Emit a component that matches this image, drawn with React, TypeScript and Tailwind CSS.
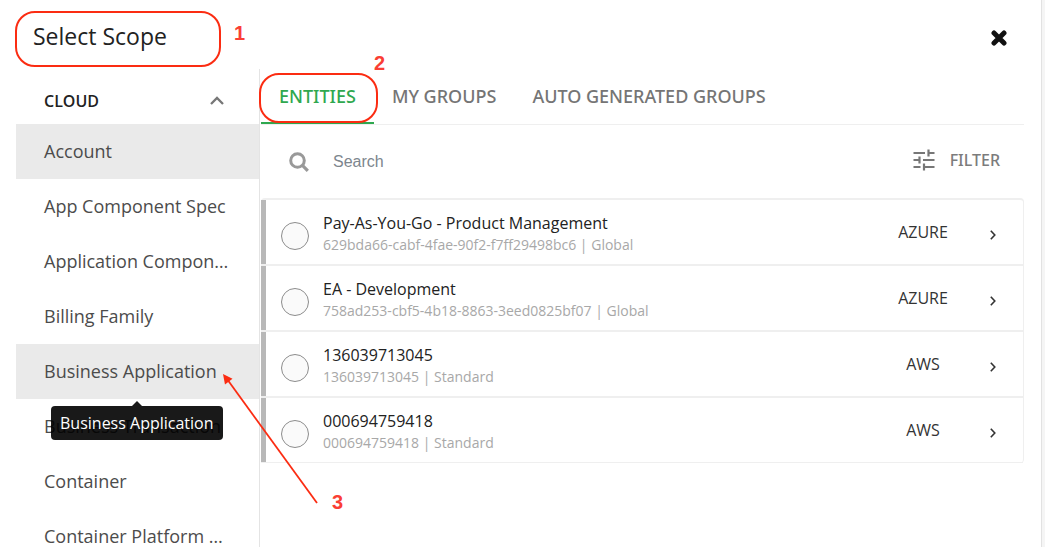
import { useState } from "react";

const CATEGORIES = [
  "Account",
  "App Component Spec",
  "Application Component",
  "Billing Family",
  "Business Application",
  "Business Transaction",
  "Container",
  "Container Platform Cluster",
];

const HOVERED = "Business Application";

const TABS = ["Entities", "My Groups", "Auto Generated Groups"];

interface Entity {
  name: string;
  id: string;
  kind: string;
  provider: string;
}

const ENTITIES: Entity[] = [
  { name: "Pay-As-You-Go - Product Management", id: "629bda66-cabf-4fae-90f2-f7ff29498bc6", kind: "Global", provider: "AZURE" },
  { name: "EA - Development", id: "758ad253-cbf5-4b18-8863-3eed0825bf07", kind: "Global", provider: "AZURE" },
  { name: "136039713045", id: "136039713045", kind: "Standard", provider: "AWS" },
  { name: "000694759418", id: "000694759418", kind: "Standard", provider: "AWS" },
];

function CloseIcon() {
  return (
    <svg viewBox="0 0 16 16" className="size-4" fill="none" stroke="#111" strokeWidth="5" strokeLinecap="round" aria-hidden="true">
      <path d="M3 3L13 13M13 3L3 13" />
    </svg>
  );
}

function ChevronUp() {
  return (
    <svg viewBox="0 0 14 9" className="h-[9px] w-3.5" fill="none" stroke="#777" strokeWidth="2.3" aria-hidden="true">
      <path d="M1 8L7 2L13 8" />
    </svg>
  );
}

function ChevronRight() {
  return (
    <svg viewBox="0 0 6 10" className="h-2.5 w-1.5" fill="none" stroke="#333" strokeWidth="1.6" aria-hidden="true">
      <path d="M0.8 0.8L4.8 5L0.8 9.2" />
    </svg>
  );
}

function SearchIcon() {
  return (
    <svg viewBox="0 0 20 20" className="size-5" fill="none" stroke="#999" strokeWidth="3" aria-hidden="true">
      <circle cx="8.5" cy="8.5" r="6.8" />
      <path d="M13.2 13.2L18.8 18.8" strokeWidth="3.2" />
    </svg>
  );
}

function TuneIcon() {
  return (
    <svg viewBox="0 0 22 22" className="size-[22px]" fill="none" stroke="#777" strokeWidth="2.2" aria-hidden="true">
      <path d="M0.500 4H12M15 4H21.500M15.500 0.500V7.500" />
      <path d="M0.500 11H7M6.500 7.500V14.500M10 11H21.500" />
      <path d="M0.500 18H7.500M11 18H21.500M11 14.500V21.500" />
    </svg>
  );
}

function Sidebar({ selected, onSelect }: { selected: string; onSelect: (name: string) => void }) {
  return (
    <nav aria-label="Scope categories" className="w-61 shrink-0 border-r border-[#e4e4e4]">
      <button type="button" aria-expanded="true" className="flex h-[55px] w-full items-center justify-between pt-2 pr-[35px] pl-7 text-base font-semibold text-[#222]">
        CLOUD
        <ChevronUp />
      </button>
      <ul>
        {CATEGORIES.map((name) => (
          <li key={name} className="relative">
            <button
              type="button"
              onClick={() => onSelect(name)}
              className={`block h-[55px] w-full truncate pr-7 pb-0.5 pl-7 text-left text-lg text-[#4c4c4c] ${
                name === selected || name === HOVERED ? "bg-[#eaeaea]" : ""
              }`}
            >
              {name}
            </button>
            {name === HOVERED && (
              <div role="tooltip" className="absolute top-full left-[35px] z-10 mt-[7px] rounded bg-black/90 px-[9px] py-[5px] text-base whitespace-nowrap text-white">
                <span className="absolute -top-[5px] left-1/2 -ml-[5px] border-x-5 border-b-5 border-x-transparent border-b-black/90" />
                {name}
              </div>
            )}
          </li>
        ))}
      </ul>
    </nav>
  );
}

function EntityRow({ entity }: { entity: Entity }) {
  return (
    <li className="flex h-[66px] items-center border-b-2 border-[#efefef] pr-[27px] last:h-[65px] last:border-b">
      <span className="h-full w-[5px] shrink-0 bg-[#b8b8b8]" />
      <label className="flex min-w-0 flex-1 items-center">
        <input
          type="radio"
          name="entity"
          className="mt-2 ml-[15px] size-7 shrink-0 appearance-none rounded-full border border-[#8c8c8c] bg-[#fafafa] checked:border-8 checked:border-[#2fa84f]"
        />
        <span className="mt-1 ml-3.5 min-w-0">
          <span className="block truncate text-base leading-[22px] text-[#222]">{entity.name}</span>
          <span className="block truncate text-sm leading-[22px] text-[#a8a8a8]">
            {entity.id} | {entity.kind}
          </span>
        </span>
      </label>
      <span className="w-16 text-center text-base text-[#333]">{entity.provider}</span>
      <button type="button" aria-label={`Open ${entity.name}`} className="ml-[35px] pt-1.5">
        <ChevronRight />
      </button>
    </li>
  );
}

function Annotations() {
  return (
    <div className="pointer-events-none absolute inset-0 z-20 font-['Liberation_Sans',sans-serif] text-xl leading-6 font-bold text-[#fa3e34]">
      <span className="absolute top-[11px] left-[15px] h-14 w-[206px] rounded-[20px] border-2 border-[#fb2c12]" />
      <span className="absolute top-[21px] left-[234px]">1</span>
      <span className="absolute top-[73px] left-[259px] h-[50px] w-[119px] rounded-[20px] border-2 border-[#fb2c12]" />
      <span className="absolute top-[51px] left-[374px]">2</span>
      <svg viewBox="0 0 96 132" className="absolute top-[373px] left-[222px] h-[132px] w-24" aria-hidden="true">
        <path d="M5 6L95 130" stroke="#fb2c12" strokeWidth="1.8" />
        <path d="M1 1L10.500 5.800L3 11.500Z" fill="#fb2c12" />
      </svg>
      <span className="absolute top-[490px] left-[332px]">3</span>
    </div>
  );
}

export default function App() {
  const [category, setCategory] = useState("Account");
  const [tab, setTab] = useState(TABS[0]);

  return (
    <div className="relative h-screen overflow-hidden bg-[#f5f5f5] pr-[3px] font-['Open_Sans','Noto_Sans',sans-serif]">
      <div className="flex h-full flex-col border-r border-[#e2e2e2] bg-white pr-[17px] pl-4">
        <header className="flex h-[69px] shrink-0 items-start justify-between pr-[17px] pl-[17px]">
          <h1 className="mt-5 text-[23px] leading-8 text-[#222]">Select Scope</h1>
          <button type="button" aria-label="Close" className="mt-[30px]">
            <CloseIcon />
          </button>
        </header>
        <div className="flex min-h-0 flex-1">
          <Sidebar selected={category} onSelect={setCategory} />
          <main className="min-w-0 flex-1 pl-px">
            <div role="tablist" className="flex h-14 border-b border-[#efefef]">
              {TABS.map((name) => (
                <button
                  key={name}
                  type="button"
                  role="tab"
                  aria-selected={name === tab}
                  onClick={() => setTab(name)}
                  className={`h-[55px] border-b-2 px-[18px] font-['Noto_Sans',sans-serif] text-lg font-medium uppercase ${
                    name === tab ? "border-[#2fa84f] text-[#2fa84f]" : "border-transparent text-[#757575]"
                  }`}
                >
                  {name}
                </button>
              ))}
            </div>
            <div className="flex h-[73px] items-center pr-6 pl-7">
              <SearchIcon />
              <input
                type="search"
                aria-label="Search"
                placeholder="Search"
                className="ml-6 min-w-0 flex-1 font-['Liberation_Sans',sans-serif] text-base outline-none placeholder:text-[#7d868e]"
              />
              <button type="button" className="flex items-center gap-[15px] pb-[3px] font-['Noto_Sans',sans-serif] text-base font-medium text-[#7c7c7c]">
                <TuneIcon />
                FILTER
              </button>
            </div>
            <ul className="rounded-sm border-t-2 border-r border-[#efefef]">
              {ENTITIES.map((entity) => (
                <EntityRow key={entity.id} entity={entity} />
              ))}
            </ul>
          </main>
        </div>
      </div>
      <Annotations />
    </div>
  );
}
